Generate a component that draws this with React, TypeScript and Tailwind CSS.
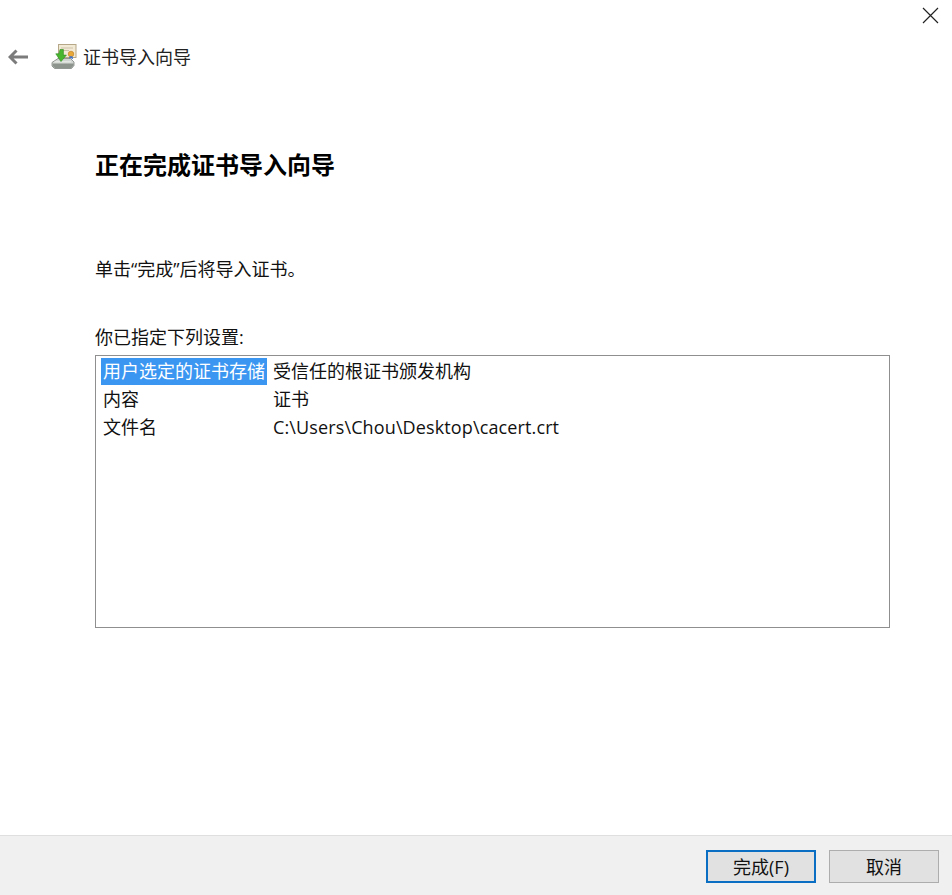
const FONT = "font-['Open_Sans','Noto_Sans_CJK_SC',sans-serif]";

function CertIcon() {
  return (
    <svg width="26" height="26" viewBox="0 0 26 26" className="shrink-0">
      <rect x="7.5" y="0.5" width="17.5" height="13" fill="#f3ead6" stroke="#b5a788" />
      <path d="M10 4h12M10 6.5h8" stroke="#cdc2a9" strokeWidth="1" />
      <circle cx="20" cy="10" r="2.8" fill="#e8a93a" stroke="#b77a20" strokeWidth="0.6" />
      <path d="M18.6 12.2l-.8 3 2.2-1 2.2 1-.8-3" fill="#3f72c8" />
      <path d="M1 18.5L7 14.5h12.5L23 18v3.5L20.5 24.5H3.5L1 22z" fill="#d2d6d2" stroke="#7d837d" strokeWidth="0.8" />
      <path d="M1.5 19.5h21.2v2L20.3 24H3.8L1.5 21.7z" fill="#8d938d" />
      <path d="M3.5 17.8H20" stroke="#f1f3f1" strokeWidth="0.8" />
      <path d="M9 5.5h3.4v5.6h3L10 17.6 4.8 9.8h3.2z" fill="#49b62f" stroke="#2c8a1c" strokeWidth="0.6" />
    </svg>
  );
}

function Row({ label, value, latin, selected }: { label: string; value: string; latin?: boolean; selected?: boolean }) {
  return (
    <div className="flex h-7 items-center">
      <div
        className={
          selected
            ? "flex h-[27px] w-[166px] shrink-0 items-center whitespace-nowrap bg-[#3b96f2] pl-[2px] text-white"
            : "flex h-[27px] w-[166px] shrink-0 items-center whitespace-nowrap pl-[2px]"
        }
      >
        {label}
      </div>
      <div className={latin ? "ml-[6px] whitespace-nowrap tracking-[0.125px]" : "ml-[6px] whitespace-nowrap"}>{value}</div>
    </div>
  );
}

export default function App() {
  return (
    <div className={`${FONT} flex h-[895px] w-[952px] flex-col overflow-hidden bg-white text-[18px] leading-7 text-[#111111]`}>
      <div className="flex justify-end pr-[13px] pt-[7px]">
        <svg width="17" height="17" viewBox="0 0 17 17">
          <path d="M1 1l15 15M16 1L1 16" stroke="#222222" strokeWidth="1.2" fill="none" />
        </svg>
      </div>
      <div className="mt-[20px] flex h-[26px] items-center pl-[8px]">
        <svg width="20" height="16" viewBox="0 0 20 16" className="shrink-0">
          <path d="M8.5 1.5L2 8l6.5 6.5M2.5 8H20" stroke="#7b7b7b" strokeWidth="3" fill="none" />
        </svg>
        <div className="ml-[23px]">
          <CertIcon />
        </div>
        <div className="ml-[6px] text-[#222222]">证书导入向导</div>
      </div>
      <div className="flex flex-1 flex-col pl-[95px] pr-[62px]">
        <h1 className="mt-[77px] h-9 text-[24px] font-bold leading-9 text-black">正在完成证书导入向导</h1>
        <p className="mt-[72px]">单击“完成”后将导入证书。</p>
        <p className="mt-[40px]">你已指定下列设置:</p>
        <div className="mt-[4px] h-[273px] border border-[#8f8f8f] pl-[5px] pt-[1px]">
          <Row label="用户选定的证书存储" value="受信任的根证书颁发机构" selected />
          <Row label="内容" value="证书" />
          <Row label="文件名" value="C:\Users\Chou\Desktop\cacert.crt" latin />
        </div>
      </div>
      <div className="flex h-[60px] justify-end gap-[13px] border-t border-[#dfdfdf] bg-[#f0f0f0] pr-[13px] pt-[14px]">
        <button className="h-[33px] w-[110px] border-2 border-[#0a6fc2] bg-[#e1e1e1] text-[18px] leading-none">完成(F)</button>
        <button className="h-[33px] w-[110px] border border-[#adadad] bg-[#e1e1e1] text-[18px] leading-none">取消</button>
      </div>
    </div>
  );
}
